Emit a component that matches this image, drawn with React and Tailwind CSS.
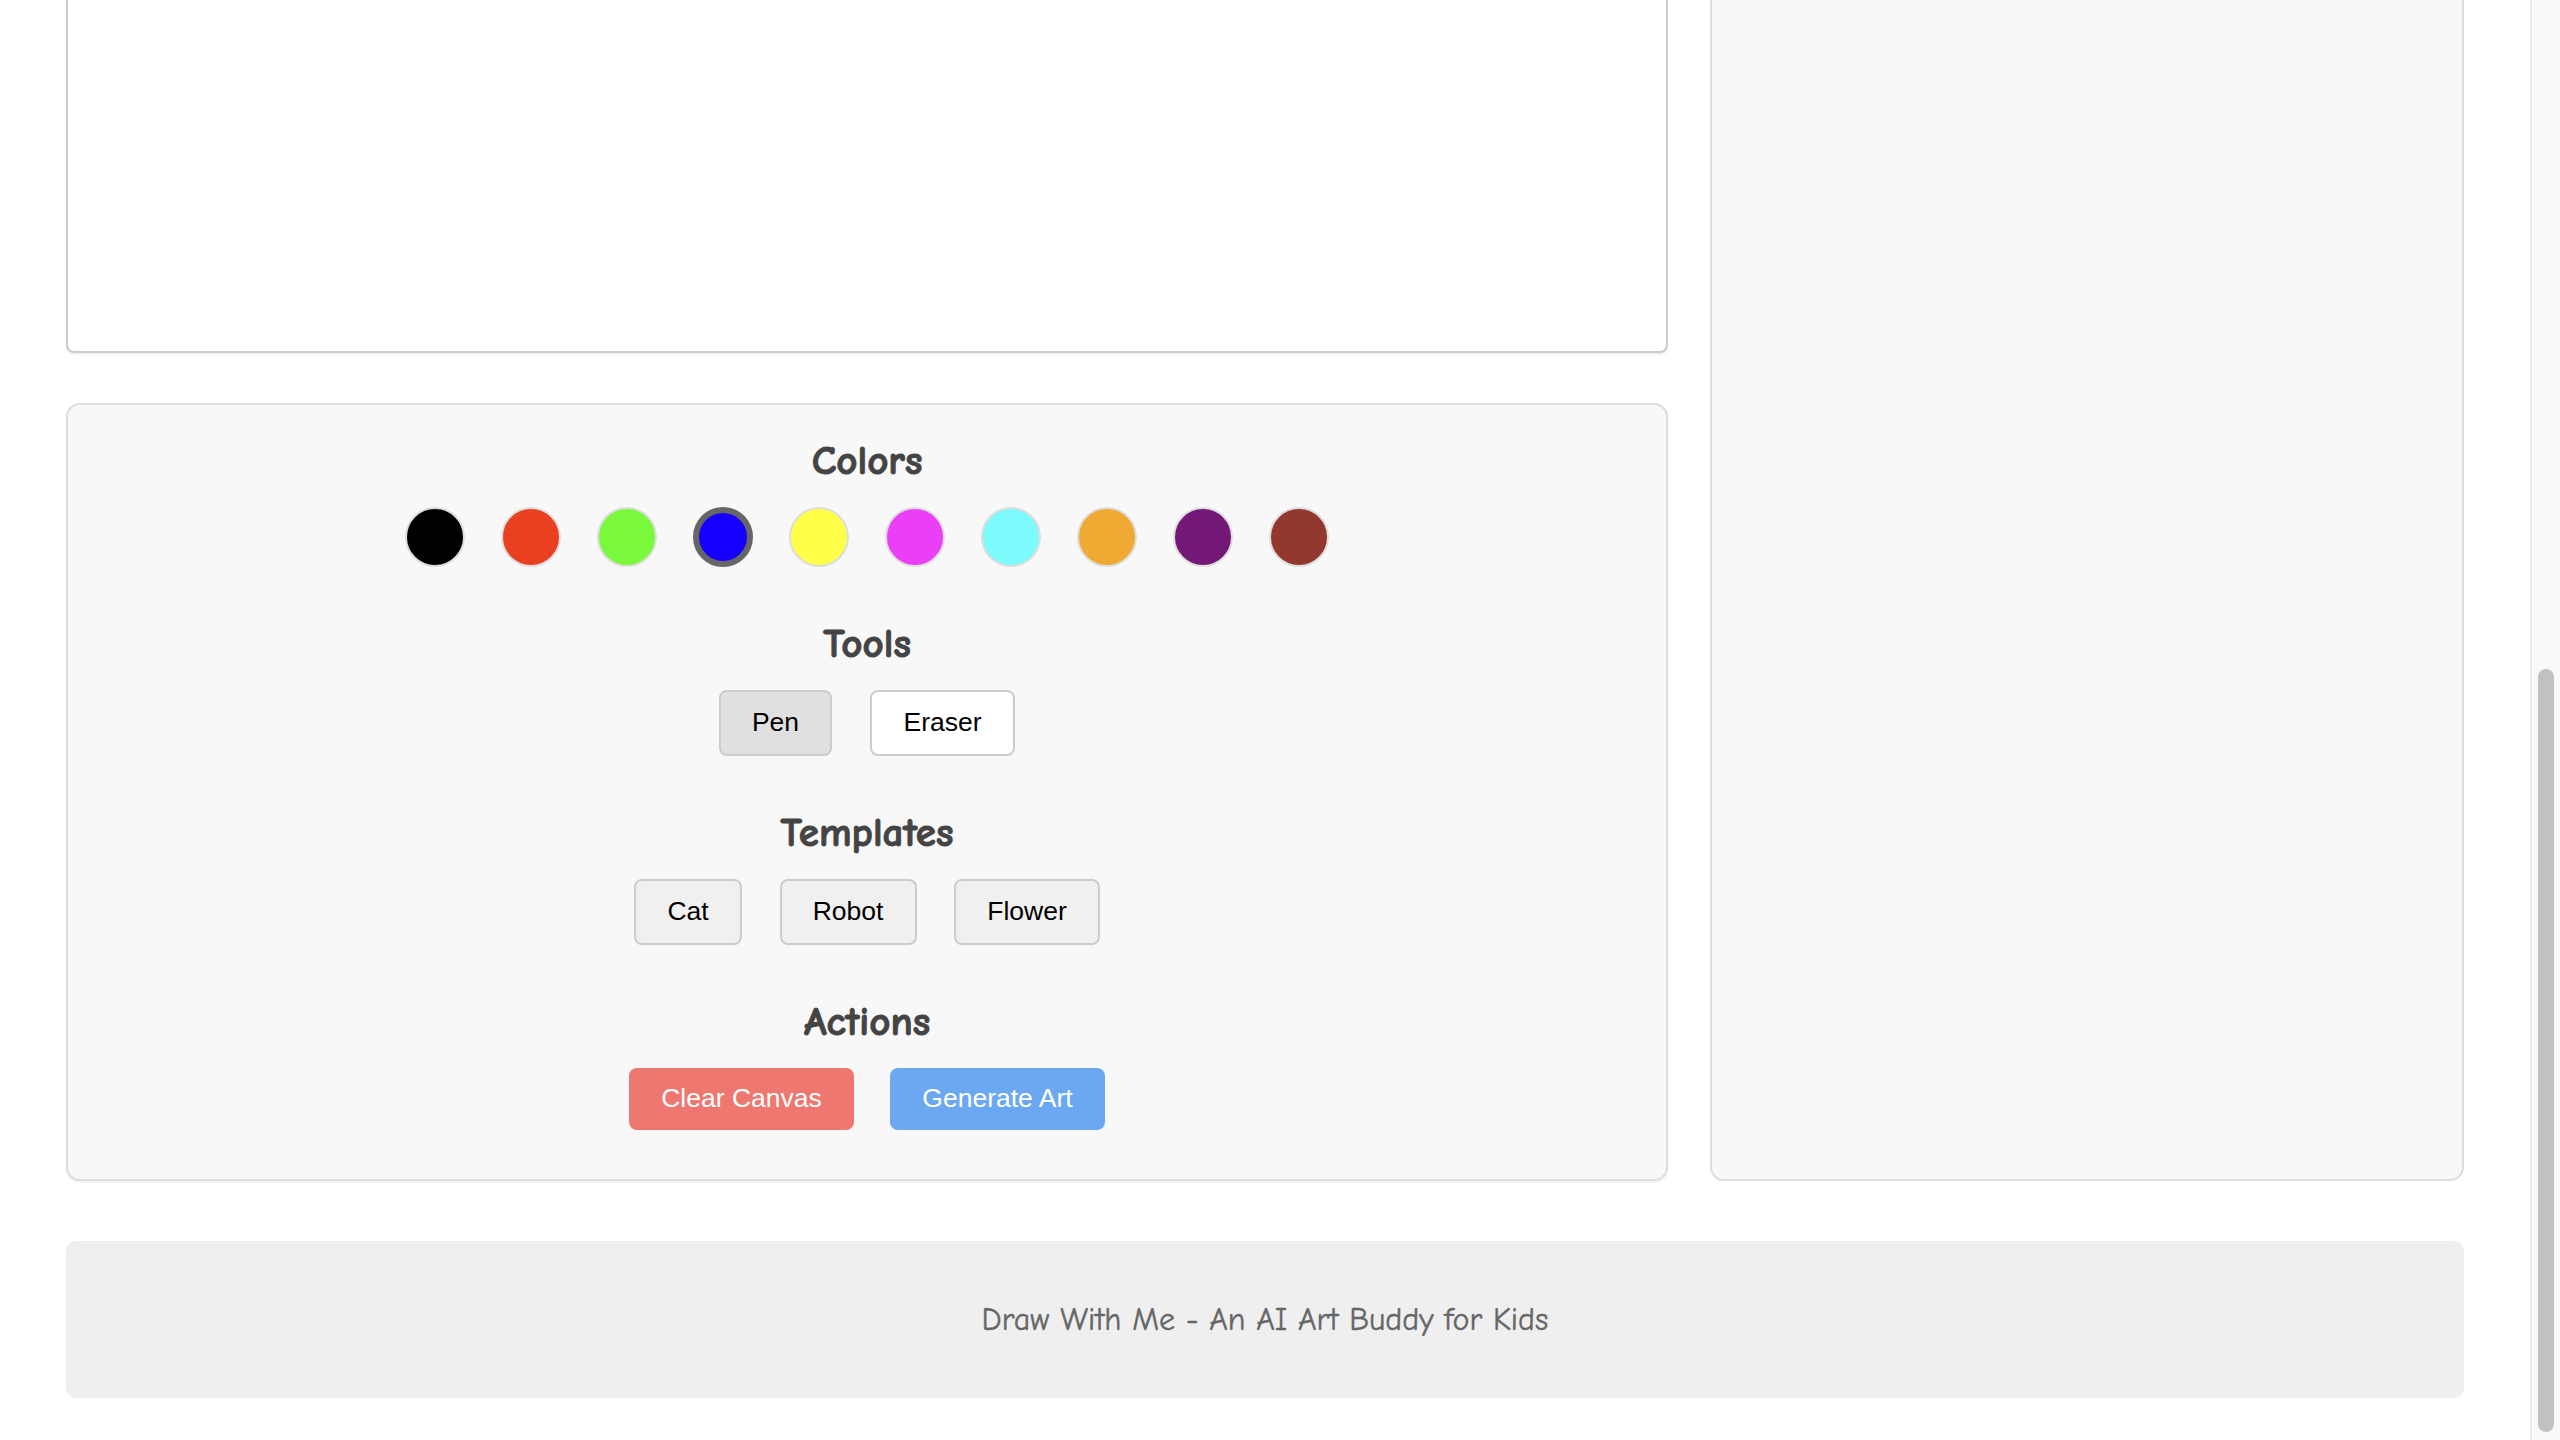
import React from "react";

const comic = { fontFamily: '"Comic Sans MS", "Comic Neue", "Open Sans", sans-serif' };

const COLORS = [
  { c: "bg-[#000000]" },
  { c: "bg-[#e84021]" },
  { c: "bg-[#7af83c]" },
  { c: "bg-[#1500ff]", selected: true },
  { c: "bg-[#ffff49]" },
  { c: "bg-[#ea3ff7]" },
  { c: "bg-[#7dfafb]" },
  { c: "bg-[#f0aa33]" },
  { c: "bg-[#741878]" },
  { c: "bg-[#93382e]" },
];

function Heading({ children }) {
  return (
    <h3
      className="text-[41px] leading-[44px] font-bold text-[#444444] text-center mb-[24px] [-webkit-text-stroke:1px_#444444]"
      style={comic}
    >
      {children}
    </h3>
  );
}

function Btn({ children, className }) {
  return (
    <button
      className={
        "h-[66px] rounded-[8px] border-2 border-[#cccccc] text-[26.5px] text-black flex items-center justify-center " +
        className
      }
      style={{ fontFamily: '"Liberation Sans", Arial, sans-serif' }}
    >
      {children}
    </button>
  );
}

export default function App() {
  return (
    <div className="w-[2560px] h-[1440px] overflow-hidden flex bg-white">
      <div className="flex-1 px-[66px] flex flex-col">
        <div className="flex gap-[42px] items-stretch">
          <div className="w-[1602px] flex flex-col">
            <div className="h-[353px] bg-white border-x-2 border-b-2 border-[#cccccc] rounded-b-[8px] shadow-[0_2px_2px_rgba(0,0,0,0.06)]" />
            <div className="mt-[50px] bg-[#f8f8f8] border-2 border-[#dddddd] rounded-[14px] pt-[34px] pb-[49px] flex flex-col items-center shadow-[0_2px_2px_rgba(0,0,0,0.05)]">
              <Heading>Colors</Heading>
              <div className="flex gap-[36px]">
                {COLORS.map((col, i) => (
                  <div
                    key={i}
                    className={
                      "w-[60px] h-[60px] rounded-full box-border " +
                      col.c +
                      (col.selected
                        ? " border-[6px] border-[#666666]"
                        : " border-2 border-[#dddddd]")
                    }
                  />
                ))}
              </div>

              <div className="mt-[55px]">
                <Heading>Tools</Heading>
              </div>
              <div className="flex gap-[38px]">
                <Btn className="w-[113px] bg-[#e0e0e0]">Pen</Btn>
                <Btn className="w-[145px] bg-white">Eraser</Btn>
              </div>

              <div className="mt-[55px]">
                <Heading>Templates</Heading>
              </div>
              <div className="flex gap-[37.5px]">
                <Btn className="w-[108px] bg-[#f0f0f0]">Cat</Btn>
                <Btn className="w-[137px] bg-[#f0f0f0]">Robot</Btn>
                <Btn className="w-[146px] bg-[#f0f0f0]">Flower</Btn>
              </div>

              <div className="mt-[55px]">
                <Heading>Actions</Heading>
              </div>
              <div className="flex gap-[36px]">
                <button
                  className="w-[225px] h-[62px] rounded-[8px] bg-[#ee776f] text-white text-[26.5px] flex items-center justify-center"
                  style={{ fontFamily: '"Liberation Sans", Arial, sans-serif' }}
                >
                  Clear Canvas
                </button>
                <button
                  className="w-[215px] h-[62px] rounded-[8px] bg-[#6ca8f2] text-white text-[26.5px] flex items-center justify-center"
                  style={{ fontFamily: '"Liberation Sans", Arial, sans-serif' }}
                >
                  Generate Art
                </button>
              </div>
            </div>
          </div>
          <div className="flex-1 bg-[#f8f8f8] border-x-2 border-b-2 border-[#dddddd] rounded-b-[14px]" />
        </div>

        <footer className="mt-[60px] h-[157px] bg-[#efefef] rounded-[10px] flex items-center justify-center">
          <p className="text-[32px] text-[#666666] [-webkit-text-stroke:0.4px_#666666]" style={comic}>
            Draw With Me - An AI Art Buddy for Kids
          </p>
        </footer>
      </div>

      <div className="w-[30px] h-full border-l-2 border-[#ebebeb] bg-[#f9f9f9] pl-[6px] pt-[669px] pb-[8px]">
        <div className="w-[16px] h-full rounded-full bg-[#c1c1c1]" />
      </div>
    </div>
  );
}
